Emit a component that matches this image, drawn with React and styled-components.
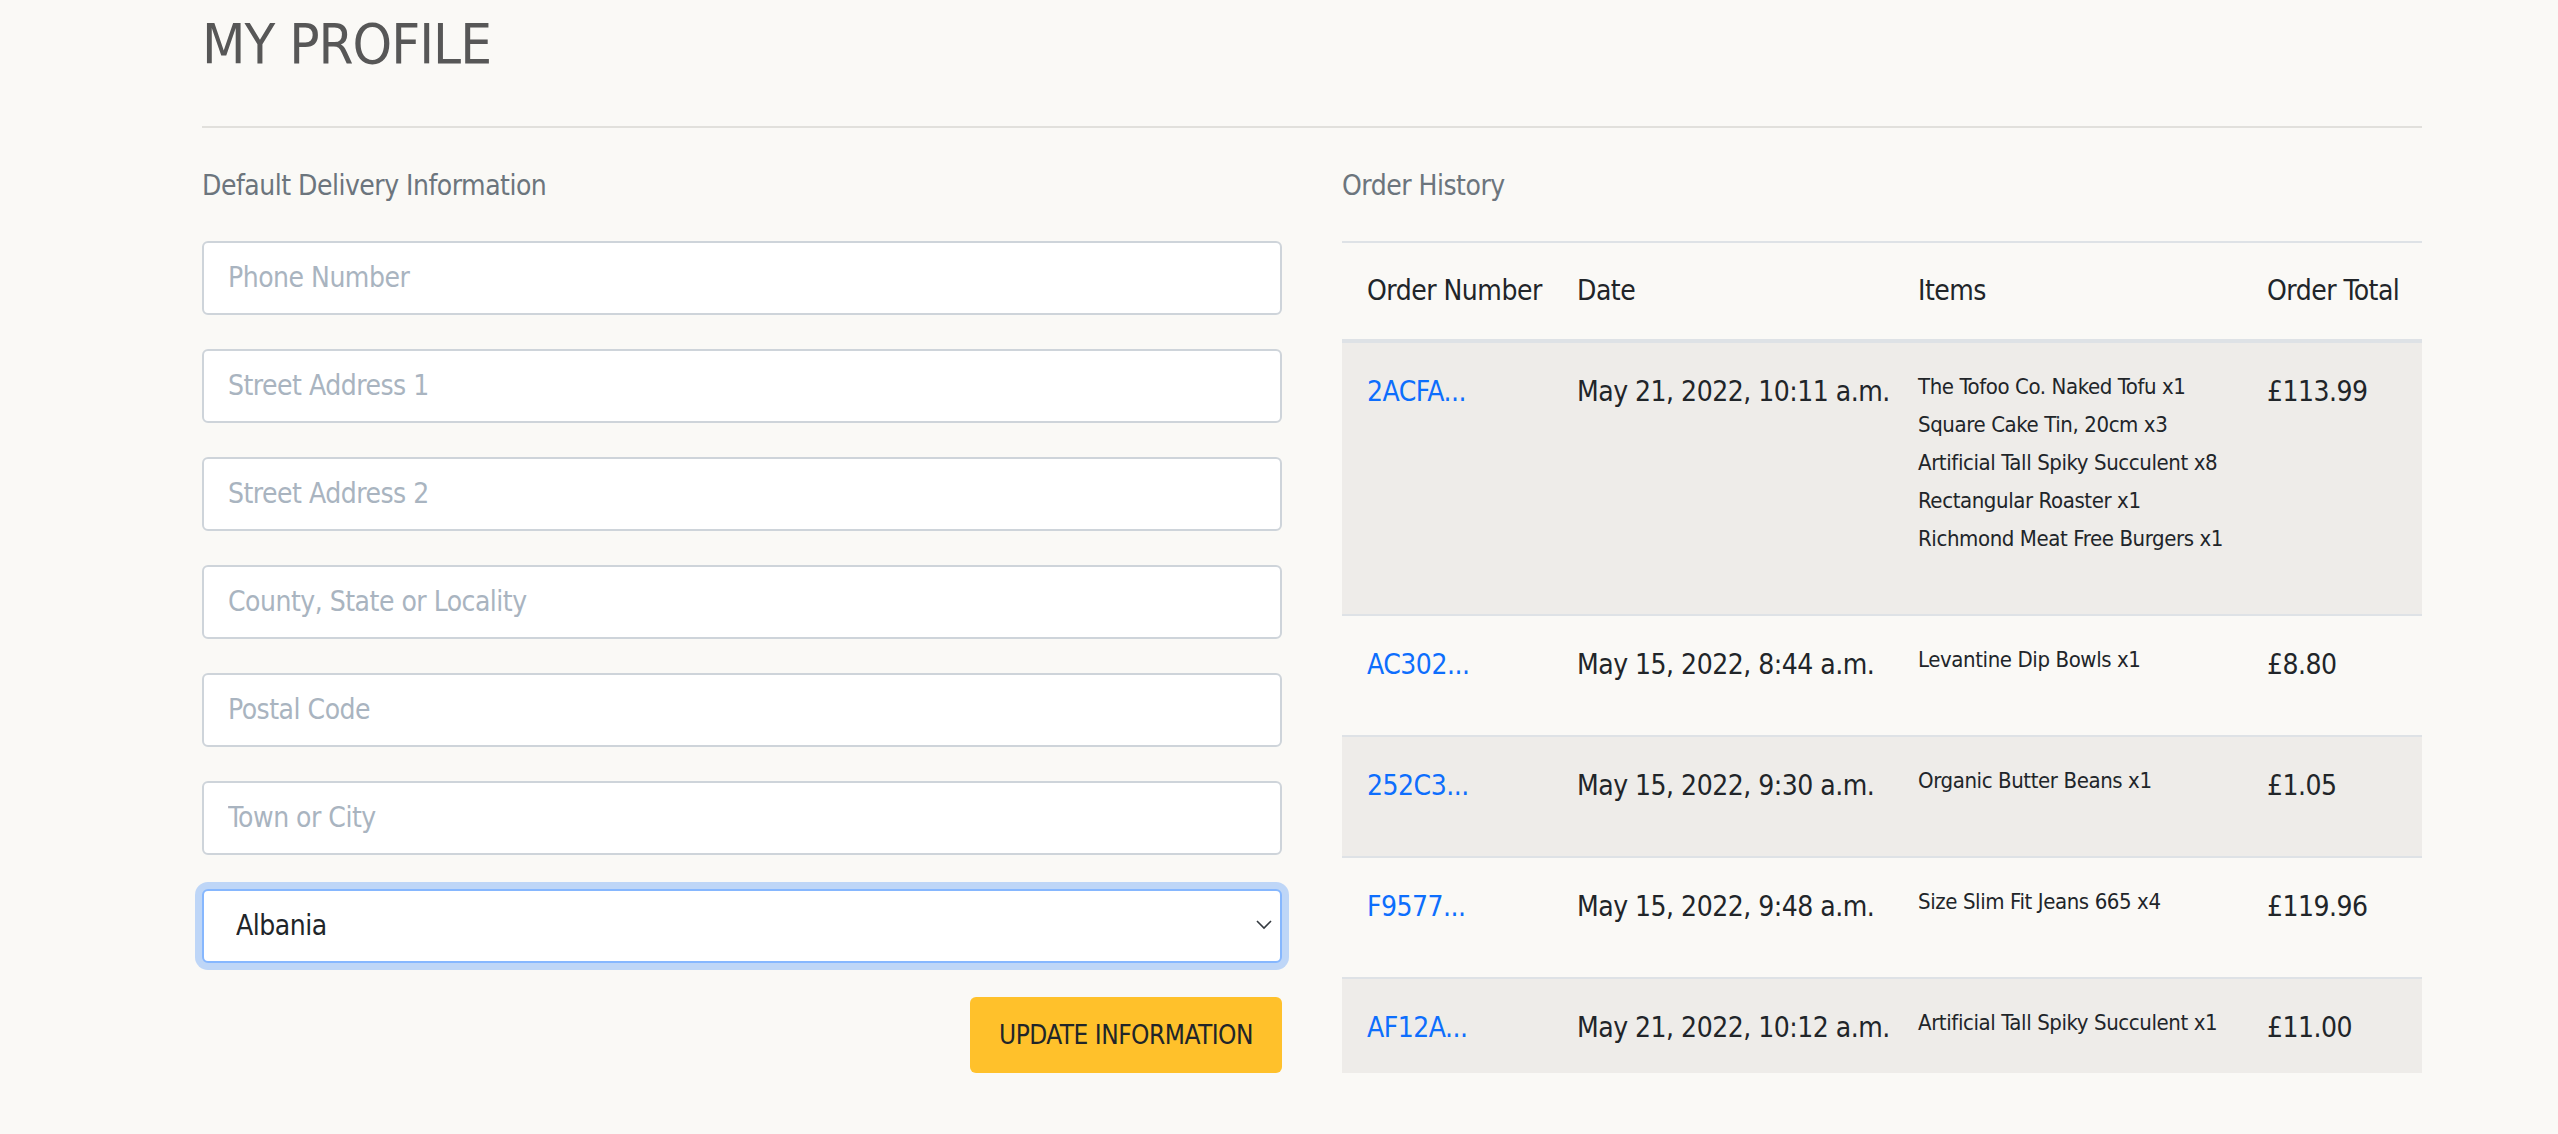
import React from "react";
import styled, { createGlobalStyle } from "styled-components";

const GlobalStyle = createGlobalStyle`
  body {
    margin: 0;
    background: #faf9f6;
    color: #212529;
    font-family: "DejaVu Sans Condensed", "DejaVu Sans", sans-serif;
    font-stretch: condensed;
  }
  * { box-sizing: border-box; }
`;

const Page = styled.div`
  width: 2220px;
  margin-left: 202px;
  padding-top: 10px;
  min-height: 1134px;
`;

const Title = styled.h1`
  margin: 0;
  font-size: 56px;
  font-weight: 400;
  line-height: 1.2;
  letter-spacing: -1px;
  color: #575757;
`;

const Rule = styled.hr`
  margin: 49px 0 0;
  border: 0;
  border-top: 2px solid #e1e0dc;
`;

const Columns = styled.div`
  display: grid;
  grid-template-columns: 1080px 1080px;
  column-gap: 60px;
  padding-top: 41px;
`;

const SectionHeading = styled.h2`
  margin: 0 0 38px;
  font-size: 28px;
  font-weight: 400;
  line-height: 1.2;
  letter-spacing: -0.5px;
  color: #6c757d;
`;

const Form = styled.form`
  display: flex;
  flex-direction: column;
  gap: 34px;
`;

const Field = styled.input`
  height: 74px;
  width: 100%;
  padding: 0 24px;
  border: 2px solid #ced4da;
  border-radius: 6px;
  background: #fff;
  font: inherit;
  font-size: 28px;
  letter-spacing: -0.5px;
  color: #212529;
  outline: none;

  &::placeholder {
    color: #a9b4c0;
  }
`;

const SelectWrap = styled.div`
  position: relative;
`;

const Select = styled.select`
  appearance: none;
  height: 74px;
  width: 100%;
  padding: 0 60px 0 32px;
  border: 2px solid #86b7fe;
  border-radius: 6px;
  background: #fff;
  box-shadow: 0 0 0 7px rgba(13, 110, 253, 0.25);
  font: inherit;
  font-size: 28px;
  letter-spacing: -0.5px;
  color: #212529;
  outline: none;
`;

const Chevron = styled.svg`
  position: absolute;
  right: 10px;
  top: 50%;
  width: 16px;
  height: 10px;
  margin-top: -6px;
  pointer-events: none;
`;

const ButtonRow = styled.div`
  display: flex;
  justify-content: flex-end;
`;

const SubmitButton = styled.button`
  height: 76px;
  width: 312px;
  padding: 0;
  border: 0;
  border-radius: 6px;
  background: #ffc12b;
  color: #212529;
  font: inherit;
  font-size: 26px;
  letter-spacing: -0.5px;
  white-space: nowrap;
  cursor: pointer;
`;

const OrderTable = styled.table`
  width: 100%;
  table-layout: fixed;
  border-collapse: collapse;
  border-top: 2px solid #dee2e6;
`;

const HeadCell = styled.th`
  padding: 24px 25px 24px;
  text-align: left;
  font-size: 28px;
  font-weight: 400;
  line-height: 48px;
  letter-spacing: -0.5px;
  color: #212529;
  white-space: nowrap;
  border-bottom: 4px solid #dee2e6;
`;

const Row = styled.tr`
  background: ${(p) => (p.$striped ? "#eeece9" : "transparent")};
  border-bottom: 2px solid #dee2e6;

  &:last-child {
    border-bottom: 0;
  }
`;

const Cell = styled.td`
  padding: 25px 25px 21px;
  vertical-align: top;
  font-size: 28px;
  line-height: 48px;
  letter-spacing: -0.5px;
  color: #212529;
  white-space: nowrap;
`;

const OrderLink = styled.a`
  color: #0d6efd;
  text-decoration: none;
`;

const ItemList = styled.div`
  margin-bottom: 35px;
  font-size: 22px;
  line-height: 38px;
  letter-spacing: -0.4px;

  tr:last-child & {
    margin-bottom: 0;
  }
`;

const orders = [
  {
    number: "2ACFA...",
    date: "May 21, 2022, 10:11 a.m.",
    items: [
      "The Tofoo Co. Naked Tofu x1",
      "Square Cake Tin, 20cm x3",
      "Artificial Tall Spiky Succulent x8",
      "Rectangular Roaster x1",
      "Richmond Meat Free Burgers x1",
    ],
    total: "£113.99",
  },
  {
    number: "AC302...",
    date: "May 15, 2022, 8:44 a.m.",
    items: ["Levantine Dip Bowls x1"],
    total: "£8.80",
  },
  {
    number: "252C3...",
    date: "May 15, 2022, 9:30 a.m.",
    items: ["Organic Butter Beans x1"],
    total: "£1.05",
  },
  {
    number: "F9577...",
    date: "May 15, 2022, 9:48 a.m.",
    items: ["Size Slim Fit Jeans 665 x4"],
    total: "£119.96",
  },
  {
    number: "AF12A...",
    date: "May 21, 2022, 10:12 a.m.",
    items: ["Artificial Tall Spiky Succulent x1"],
    total: "£11.00",
  },
];

const fields = [
  "Phone Number",
  "Street Address 1",
  "Street Address 2",
  "County, State or Locality",
  "Postal Code",
  "Town or City",
];

const App = () => {
  return (
    <>
      <GlobalStyle />
      <Page>
        <Title>MY PROFILE</Title>
        <Rule />
        <Columns>
          <section>
            <SectionHeading>Default Delivery Information</SectionHeading>
            <Form onSubmit={(e) => e.preventDefault()}>
              {fields.map((f) => (
                <Field key={f} placeholder={f} />
              ))}
              <SelectWrap>
                <Select defaultValue="Albania">
                  <option>Albania</option>
                </Select>
                <Chevron viewBox="0 0 16 10">
                  <polyline points="1,1 8,8 15,1" fill="none" stroke="#343a40" strokeWidth="1.6" />
                </Chevron>
              </SelectWrap>
              <ButtonRow>
                <SubmitButton type="submit">UPDATE INFORMATION</SubmitButton>
              </ButtonRow>
            </Form>
          </section>
          <section>
            <SectionHeading>Order History</SectionHeading>
            <OrderTable>
              <colgroup>
                <col style={{ width: 210 }} />
                <col style={{ width: 341 }} />
                <col style={{ width: 349 }} />
                <col style={{ width: 180 }} />
              </colgroup>
              <thead>
                <tr>
                  <HeadCell>Order Number</HeadCell>
                  <HeadCell>Date</HeadCell>
                  <HeadCell>Items</HeadCell>
                  <HeadCell>Order Total</HeadCell>
                </tr>
              </thead>
              <tbody>
                {orders.map((o, i) => (
                  <Row key={o.number} $striped={i % 2 === 0}>
                    <Cell>
                      <OrderLink href="#">{o.number}</OrderLink>
                    </Cell>
                    <Cell>{o.date}</Cell>
                    <Cell>
                      <ItemList>
                        {o.items.map((item) => (
                          <div key={item}>{item}</div>
                        ))}
                      </ItemList>
                    </Cell>
                    <Cell>{o.total}</Cell>
                  </Row>
                ))}
              </tbody>
            </OrderTable>
          </section>
        </Columns>
      </Page>
    </>
  );
};

export default App;
